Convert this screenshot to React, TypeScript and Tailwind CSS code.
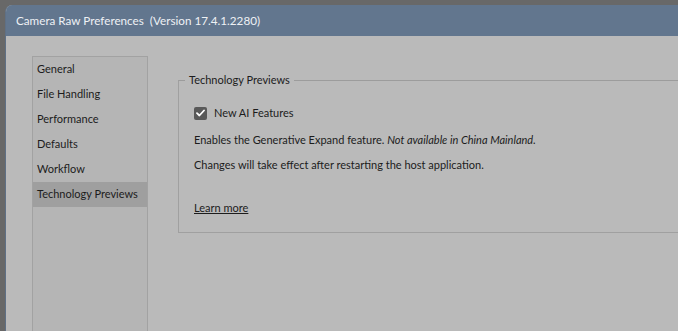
import React from 'react';

const font = { fontFamily: 'Lato, "Open Sans", "Liberation Sans", sans-serif' };

const sections = ['General', 'File Handling', 'Performance', 'Defaults', 'Workflow', 'Technology Previews'];

export default function App() {
  return (
    <div className="w-[678px] h-[331px] bg-[#686868] pt-[5px] pl-[5px] overflow-hidden" style={font}>
      <div className="h-full rounded-tl-[7px] overflow-hidden bg-[#bababa] flex flex-col border-l border-[#5f7085]">
        <div className="h-[31px] shrink-0 bg-[#62768e] flex items-center pl-[10px] text-[11.7px] text-[#eef1f5]">
          Camera Raw Preferences&nbsp;&nbsp;(Version 17.4.1.2280)
        </div>
        <div className="flex flex-1 pt-[20px] pl-[26px] text-[11px] text-[#1c1c1c]">
          <div className="w-[116px] shrink-0 border border-b-0 border-[#a2a2a2] bg-[#b5b5b5]">
            {sections.map((s) => (
              <div
                key={s}
                className={`h-[25px] flex items-center pl-[4px] whitespace-nowrap ${s === 'Technology Previews' ? 'bg-[#9f9f9f]' : ''}`}
              >
                {s}
              </div>
            ))}
          </div>
          <div className="flex-1 pl-[30px] pt-[24px]">
            <div className="relative h-[153px] border border-r-0 border-[#a0a0a0] border-t-[#9c9c9c] pl-[15px] pt-[23px]">
              <span className="absolute -top-[10px] left-[6px] px-[4px] bg-[#bababa] leading-[18px]">Technology Previews</span>
              <label className="flex items-center gap-[7px] h-[18px]">
                <span className="w-[13px] h-[13px] rounded-[2px] bg-[#595959] flex items-center justify-center">
                  <svg width="9" height="8" viewBox="0 0 9 8">
                    <path d="M1 4.2 L3.4 6.5 L8 1.5" stroke="#ffffff" strokeWidth="1.8" fill="none" strokeLinecap="round" strokeLinejoin="round" />
                  </svg>
                </span>
                <span>New AI Features</span>
              </label>
              <p className="mt-[9px] leading-[18px]">
                Enables the Generative Expand feature. <i>Not available in China Mainland.</i>
              </p>
              <p className="mt-[7px] leading-[18px]">Changes will take effect after restarting the host application.</p>
              <p className="mt-[25px] leading-[18px] underline">Learn more</p>
            </div>
          </div>
        </div>
      </div>
    </div>
  );
}
